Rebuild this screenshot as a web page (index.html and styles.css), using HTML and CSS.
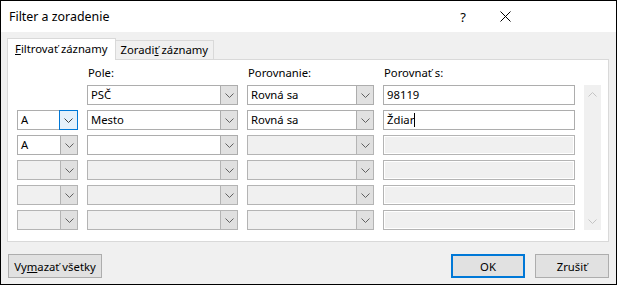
FILE: index.html
```html
<!DOCTYPE html>
<html lang="sk">
<head>
  <meta charset="UTF-8">
  <title>Filter a zoradenie</title>
  <link rel="stylesheet" href="styles.css">
</head>
<body>
  <div class="window">
    <div class="titlebar">
      <span class="title">Filter a zoradenie</span>
      <span class="help">?</span>
      <svg class="close" width="11" height="11" viewBox="0 0 11 11">
        <path d="M0.5 0.5 L10.5 10.5 M10.5 0.5 L0.5 10.5" stroke="#000" stroke-width="1" fill="none"/>
      </svg>
    </div>

    <div class="client">
      <div class="tabs">
        <div class="tab active"><u>F</u>iltrovať záznamy</div>
        <div class="tab">Zoradi<u>ť</u> záznamy</div>
      </div>

      <div class="panel">
        <div class="grid">
          <div class="label"></div>
          <div class="label">Pole:</div>
          <div class="label">Porovnanie:</div>
          <div class="label">Porovnať s:</div>
          <div class="label"></div>

          <!-- row 1 -->
          <div></div>
          <div class="combo"><span class="val">PSČ</span><span class="btn"><svg width="9" height="5"><polyline points="0.5,0.5 4.5,4.5 8.5,0.5" fill="none" stroke="#606060"/></svg></span></div>
          <div class="combo"><span class="val">Rovná sa</span><span class="btn"><svg width="9" height="5"><polyline points="0.5,0.5 4.5,4.5 8.5,0.5" fill="none" stroke="#606060"/></svg></span></div>
          <div class="field">98119</div>
          <div class="scroll">
            <svg width="9" height="5"><polyline points="0.5,4.5 4.5,0.5 8.5,4.5" fill="none" stroke="#c4c4c4"/></svg>
            <svg width="9" height="5"><polyline points="0.5,0.5 4.5,4.5 8.5,0.5" fill="none" stroke="#c4c4c4"/></svg>
          </div>

          <!-- row 2 -->
          <div class="combo"><span class="val">A</span><span class="btn focus"><svg width="9" height="5"><polyline points="0.5,0.5 4.5,4.5 8.5,0.5" fill="none" stroke="#404040"/></svg></span></div>
          <div class="combo"><span class="val">Mesto</span><span class="btn"><svg width="9" height="5"><polyline points="0.5,0.5 4.5,4.5 8.5,0.5" fill="none" stroke="#606060"/></svg></span></div>
          <div class="combo"><span class="val">Rovná sa</span><span class="btn"><svg width="9" height="5"><polyline points="0.5,0.5 4.5,4.5 8.5,0.5" fill="none" stroke="#606060"/></svg></span></div>
          <div class="field">Ždiar<span class="caret"></span></div>

          <!-- row 3 -->
          <div class="combo"><span class="val">A</span><span class="btn"><svg width="9" height="5"><polyline points="0.5,0.5 4.5,4.5 8.5,0.5" fill="none" stroke="#606060"/></svg></span></div>
          <div class="combo"><span class="val"></span><span class="btn"><svg width="9" height="5"><polyline points="0.5,0.5 4.5,4.5 8.5,0.5" fill="none" stroke="#606060"/></svg></span></div>
          <div class="combo off"><span class="val"></span><span class="btn"><svg width="9" height="5"><polyline points="0.5,0.5 4.5,4.5 8.5,0.5" fill="none" stroke="#606060"/></svg></span></div>
          <div class="field off"></div>

          <!-- row 4 -->
          <div class="combo off"><span class="val"></span><span class="btn"><svg width="9" height="5"><polyline points="0.5,0.5 4.5,4.5 8.5,0.5" fill="none" stroke="#606060"/></svg></span></div>
          <div class="combo off"><span class="val"></span><span class="btn"><svg width="9" height="5"><polyline points="0.5,0.5 4.5,4.5 8.5,0.5" fill="none" stroke="#606060"/></svg></span></div>
          <div class="combo off"><span class="val"></span><span class="btn"><svg width="9" height="5"><polyline points="0.5,0.5 4.5,4.5 8.5,0.5" fill="none" stroke="#606060"/></svg></span></div>
          <div class="field off"></div>

          <!-- row 5 -->
          <div class="combo off"><span class="val"></span><span class="btn"><svg width="9" height="5"><polyline points="0.5,0.5 4.5,4.5 8.5,0.5" fill="none" stroke="#606060"/></svg></span></div>
          <div class="combo off"><span class="val"></span><span class="btn"><svg width="9" height="5"><polyline points="0.5,0.5 4.5,4.5 8.5,0.5" fill="none" stroke="#606060"/></svg></span></div>
          <div class="combo off"><span class="val"></span><span class="btn"><svg width="9" height="5"><polyline points="0.5,0.5 4.5,4.5 8.5,0.5" fill="none" stroke="#606060"/></svg></span></div>
          <div class="field off"></div>

          <!-- row 6 -->
          <div class="combo off"><span class="val"></span><span class="btn"><svg width="9" height="5"><polyline points="0.5,0.5 4.5,4.5 8.5,0.5" fill="none" stroke="#606060"/></svg></span></div>
          <div class="combo off"><span class="val"></span><span class="btn"><svg width="9" height="5"><polyline points="0.5,0.5 4.5,4.5 8.5,0.5" fill="none" stroke="#606060"/></svg></span></div>
          <div class="combo off"><span class="val"></span><span class="btn"><svg width="9" height="5"><polyline points="0.5,0.5 4.5,4.5 8.5,0.5" fill="none" stroke="#606060"/></svg></span></div>
          <div class="field off"></div>
        </div>
      </div>

      <div class="buttons">
        <button class="button clear">Vy<u>m</u>azať všetky</button>
        <span class="spacer"></span>
        <button class="button default">OK</button>
        <button class="button">Zrušiť</button>
      </div>
    </div>
  </div>
</body>
</html>
```

FILE: styles.css
```css
/* Window */
body {
  margin: 0;
  font-family: "Noto Sans", "DejaVu Sans", sans-serif;
  font-size: 11.3px;
  color: #000;
}

.window {
  width: 617px;
  height: 285px;
  box-sizing: border-box;
  border: 1px solid #000;
  background: #f0f0f0;
  display: flex;
  flex-direction: column;
}

/* Title bar */
.titlebar {
  height: 31px;
  background: #fff;
  display: flex;
  align-items: center;
  padding-left: 8px;
  flex-shrink: 0;
}

.title {
  font-size: 12.4px;
  flex: 1;
}

.help {
  font-size: 13px;
  margin-right: 34px;
}

.close {
  margin-right: 105px;
}

/* Client area */
.client {
  flex: 1;
  padding: 6px 7px 0 6px;
  display: flex;
  flex-direction: column;
}

.tabs {
  display: flex;
  align-items: flex-end;
  height: 21px;
}

.tab {
  box-sizing: border-box;
  height: 19px;
  padding: 0 5px;
  border: 1px solid #d9d9d9;
  border-bottom: none;
  line-height: 17px;
  background: #f0f0f0;
}

.tab.active {
  background: #fff;
  padding: 0 7px;
  line-height: 20px;
  position: relative;
  z-index: 1;
  margin-bottom: -1px;
  height: 22px;
}

.tab + .tab {
  border-left: none;
}

.panel {
  height: 183px;
  box-sizing: border-box;
  background: #fff;
  border: 1px solid #d9d9d9;
  padding: 6px 0 0 9px;
}

/* Filter grid */
.grid {
  display: grid;
  grid-template-columns: 61px 151px 127px 192px 17px;
  grid-template-rows: 14px repeat(6, 20px);
  column-gap: 9px;
  row-gap: 5px;
}

.label {
  line-height: 14px;
  padding-left: 1px;
}

.combo {
  box-sizing: border-box;
  display: flex;
  border: 1px solid #adadad;
  background: #fff;
  height: 20px;
}

.combo .val {
  flex: 1;
  padding-left: 3px;
  line-height: 18px;
}

.combo .btn {
  width: 16px;
  border-left: 1px solid #adadad;
  background: #e1e1e1;
  display: flex;
  align-items: center;
  justify-content: center;
}

.combo .btn.focus {
  border: 1px solid #0078d7;
  background: #e5f1fb;
  margin: -1px -1px -1px 0;
  width: 17px;
}

.combo.off {
  background: #f0f0f0;
  border-color: #b4b4b4;
}

.combo.off .btn {
  border-left-color: #b4b4b4;
  background: #e0e0e0;
}

.field {
  box-sizing: border-box;
  height: 20px;
  border: 1px solid #adadad;
  background: #fff;
  padding-left: 3px;
  line-height: 18px;
  display: flex;
  align-items: center;
}

.field.off {
  background: #f0f0f0;
  border-color: #b4b4b4;
  box-shadow: inset 0 0 0 1px #fff;
}

.caret {
  width: 1px;
  height: 14px;
  background: #000;
}

.scroll {
  grid-column: 5;
  grid-row: 2 / span 6;
  background: #f0f0f0;
  display: flex;
  flex-direction: column;
  align-items: center;
  justify-content: space-between;
  padding: 7px 0 6px;
}

/* Bottom buttons */
.buttons {
  display: flex;
  margin-top: 12px;
  gap: 10px;
}

.spacer {
  flex: 1;
}

.button {
  font: inherit;
  height: 24px;
  box-sizing: border-box;
  border: 1px solid #adadad;
  background: #e1e1e1;
  width: 74px;
  padding: 0;
  margin: 0;
}

.button.clear {
  width: 94px;
  margin-left: 1px;
}

.button.default {
  border: 2px solid #0078d7;
}
```
